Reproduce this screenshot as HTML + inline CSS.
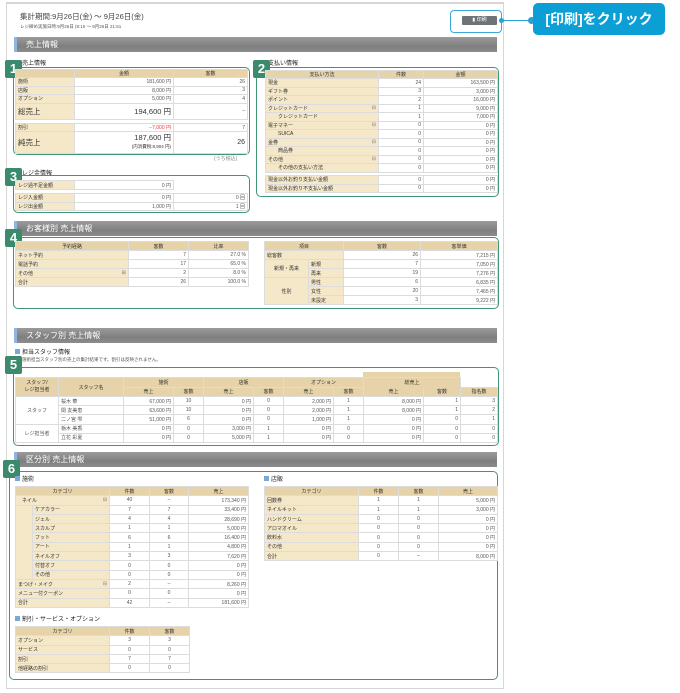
<!DOCTYPE html>
<html><head><meta charset="utf-8"><style>
*{margin:0;padding:0;box-sizing:border-box}
body{width:680px;height:693px;background:#fff;position:relative;overflow:hidden;font-family:"Liberation Sans","Noto Sans CJK JP",sans-serif;color:#333}
.a{position:absolute}
.frame{left:6px;top:2px;width:498px;height:687px;border:1px solid #d6d6d6;border-top:2px solid #d6d6d6}
.bar{position:absolute;left:14px;width:483px;height:15px;background:linear-gradient(#9a9a9a,#7f7f7f 60%,#8c8c8c);border-left:3px solid #8fb5e0;color:#fff;font-size:8px;line-height:15px;padding-left:9px}
.box{position:absolute;border:1.5px solid #3f9676;border-radius:5px}
.badge{position:absolute;width:17px;height:18px;background:#3a8a6b;color:#fff;font-weight:bold;font-size:13px;line-height:18px;text-align:center;border-radius:2px}
.sub{position:absolute;font-size:6px;color:#222;white-space:nowrap}
.sub i{display:inline-block;width:5px;height:5px;background:#7aa6d8;margin-right:2px}
table{position:absolute;border-collapse:collapse;table-layout:fixed;font-size:5px}
td{border:1px solid #dcdcdc;padding:0 2px;white-space:nowrap;overflow:hidden;background:#fff;text-align:right;color:#555}
td.h{background:#e6d3a9;text-align:center;color:#333}
td.l{background:#f4e8c8;text-align:left;color:#333}
td.c{text-align:center}
.pl{float:right;color:#777}
</style></head><body>
<div class="a frame"></div>
<div class="a" style="left:20px;top:11px;font-size:7.5px;color:#444">集計期間:9月26日(金) ～ 9月26日(金)</div>
<div class="a" style="left:20px;top:24px;font-size:4.5px;color:#555">レジ締め実施日時:9月26日 (9:10 ～ 9月26日 21:51</div>
<div class="a" style="left:450px;top:10px;width:52px;height:23px;border:1.5px solid #3aa9d8;border-radius:4px"></div>
<div class="a" style="left:462px;top:16px;width:35px;height:9px;background:#6e7378;border-radius:1px;color:#fff;font-size:5px;line-height:9px;text-align:center">▮ 印刷</div>
<div class="a" style="left:502px;top:20px;width:32px;height:1px;background:#2aa0d4"></div>
<div class="a" style="left:499px;top:18px;width:5px;height:5px;border-radius:50%;background:#2aa0d4"></div>
<div class="a" style="left:528px;top:17px;width:7px;height:7px;border-radius:50%;background:#2aa0d4"></div>
<div class="a" style="left:533px;top:3px;width:132px;height:32px;background:#0c9fd6;border-radius:5px;color:#fff;font-weight:bold;font-size:14px;line-height:32px;text-align:center">[印刷]をクリック</div>

<div class="bar" style="top:37px">売上情報</div>
<div class="sub" style="left:22px;top:58px">売上情報</div>
<div class="box" style="left:13px;top:67px;width:237px;height:88px"></div>
<div class="badge" style="left:5px;top:60px">1</div>
<table style="left:15px;top:69px;width:232px">
<col style="width:59px"><col style="width:99px"><col style="width:74px">
<tr style="height:8px"><td class="h"></td><td class="h">金額</td><td class="h">客数</td></tr>
<tr style="height:8.5px"><td class="l">施術</td><td>181,600 円</td><td>26</td></tr>
<tr style="height:8.5px"><td class="l">店販</td><td>8,000 円</td><td>3</td></tr>
<tr style="height:8.5px"><td class="l">オプション</td><td>5,000 円</td><td>4</td></tr>
<tr style="height:16px"><td class="l" style="font-size:7.5px">総売上</td><td style="font-size:7.5px;color:#333">194,600 円</td><td>–</td></tr>
</table>
<table style="left:15px;top:123px;width:232px">
<col style="width:59px"><col style="width:99px"><col style="width:74px">
<tr style="height:8px"><td class="l">割引</td><td style="color:#e33">−7,000 円</td><td>7</td></tr>
<tr style="height:22px"><td class="l" style="font-size:7.5px">純売上</td><td style="font-size:7.5px;color:#333;line-height:8px">187,600 円<br><span style="font-size:4.5px">(内消費税:8,904 円)</span></td><td style="font-size:7px;color:#333">26</td></tr>
</table>
<div class="a" style="left:214px;top:155px;font-size:5px;color:#888">(うち税込)</div>

<div class="sub" style="left:268px;top:58px">支払い情報</div>
<div class="box" style="left:256px;top:67px;width:243px;height:130px"></div>
<div class="badge" style="left:253px;top:60px">2</div>
<table style="left:265px;top:70px;width:232px">
<col style="width:113px"><col style="width:45px"><col style="width:74px">
<tr style="height:8px"><td class="h">支払い方法</td><td class="h">件数</td><td class="h">金額</td></tr>
<tr style="height:8.5px"><td class="l">現金</td><td>24</td><td>163,500 円</td></tr>
<tr style="height:8.5px"><td class="l">ギフト券</td><td>3</td><td>3,000 円</td></tr>
<tr style="height:8.5px"><td class="l">ポイント</td><td>2</td><td>16,000 円</td></tr>
<tr style="height:8.5px"><td class="l">クレジットカード<span class="pl">⊟</span></td><td>1</td><td>9,000 円</td></tr>
<tr style="height:8.5px"><td class="l" style="padding-left:12px">クレジットカード</td><td>1</td><td>7,000 円</td></tr>
<tr style="height:8.5px"><td class="l">電子マネー<span class="pl">⊟</span></td><td>0</td><td>0 円</td></tr>
<tr style="height:8.5px"><td class="l" style="padding-left:12px">SUICA</td><td>0</td><td>0 円</td></tr>
<tr style="height:8.5px"><td class="l">金券<span class="pl">⊟</span></td><td>0</td><td>0 円</td></tr>
<tr style="height:8.5px"><td class="l" style="padding-left:12px">商品券</td><td>0</td><td>0 円</td></tr>
<tr style="height:8.5px"><td class="l">その他<span class="pl">⊟</span></td><td>0</td><td>0 円</td></tr>
<tr style="height:8.5px"><td class="l" style="padding-left:12px">その他の支払い方法</td><td>0</td><td>0 円</td></tr>
</table>
<table style="left:265px;top:175px;width:232px">
<col style="width:113px"><col style="width:45px"><col style="width:74px">
<tr style="height:8.5px"><td class="l">現金以外お釣り支払い金額</td><td>0</td><td>0 円</td></tr>
<tr style="height:8.5px"><td class="l">現金以外お釣り不支払い金額</td><td>0</td><td>0 円</td></tr>
</table>

<div class="sub" style="left:22px;top:168px">レジ金情報</div>
<div class="box" style="left:13px;top:175px;width:237px;height:38px"></div>
<div class="badge" style="left:5px;top:168px">3</div>
<table style="left:15px;top:180px;width:158px">
<col style="width:59px"><col style="width:99px">
<tr style="height:9px"><td class="l">レジ過不足金額</td><td>0 円</td></tr>
</table>
<table style="left:15px;top:193px;width:232px">
<col style="width:59px"><col style="width:99px"><col style="width:74px">
<tr style="height:8.5px"><td class="l">レジ入金額</td><td>0 円</td><td>0 回</td></tr>
<tr style="height:8.5px"><td class="l">レジ出金額</td><td>1,000 円</td><td>1 回</td></tr>
</table>

<div class="bar" style="top:221px">お客様別 売上情報</div>
<div class="box" style="left:13px;top:237px;width:486px;height:72px"></div>
<div class="badge" style="left:5px;top:229px">4</div>
<table style="left:15px;top:241px;width:233px">
<col style="width:113px"><col style="width:60px"><col style="width:60px">
<tr style="height:9px"><td class="h">予約経路</td><td class="h">客数</td><td class="h">比率</td></tr>
<tr style="height:9px"><td class="l">ネット予約</td><td>7</td><td>27.0 %</td></tr>
<tr style="height:9px"><td class="l">電話予約</td><td>17</td><td>65.0 %</td></tr>
<tr style="height:9px"><td class="l">その他<span class="pl">⊞</span></td><td>2</td><td>8.0 %</td></tr>
<tr style="height:9px"><td class="l">合計</td><td>26</td><td>100.0 %</td></tr>
</table>
<table style="left:264px;top:241px;width:233px">
<col style="width:44px"><col style="width:35px"><col style="width:77px"><col style="width:77px">
<tr style="height:9px"><td class="h" colspan="2">項目</td><td class="h">客数</td><td class="h">客単価</td></tr>
<tr style="height:9px"><td class="l" colspan="2">総客数</td><td>26</td><td>7,215 円</td></tr>
<tr style="height:9px"><td class="l c" rowspan="2">新規・再来</td><td class="l">新規</td><td>7</td><td>7,050 円</td></tr>
<tr style="height:9px"><td class="l">再来</td><td>19</td><td>7,276 円</td></tr>
<tr style="height:9px"><td class="l c" rowspan="3">性別</td><td class="l">男性</td><td>6</td><td>6,835 円</td></tr>
<tr style="height:9px"><td class="l">女性</td><td>20</td><td>7,465 円</td></tr>
<tr style="height:9px"><td class="l">未設定</td><td>3</td><td>9,222 円</td></tr>
</table>

<div class="bar" style="top:328px">スタッフ別 売上情報</div>
<div class="sub" style="left:15px;top:347px"><i></i>担当スタッフ情報</div>
<div class="a" style="left:22px;top:357px;font-size:4.5px;color:#555">施術担当スタッフ別の売上の集計結果です。割引は反映されません。</div>
<div class="box" style="left:13px;top:367px;width:486px;height:79px"></div>
<div class="badge" style="left:5px;top:356px">5</div>
<div class="a" style="left:363px;top:372px;width:97px;height:15px;background:#e6d3a9"></div>
<table style="left:15px;top:377px;width:482px">
<col style="width:43px"><col style="width:65px"><col style="width:50px"><col style="width:30px"><col style="width:50px"><col style="width:30px"><col style="width:50px"><col style="width:30px"><col style="width:60px"><col style="width:37px"><col style="width:37px">
<tr style="height:9.5px"><td class="h" rowspan="2" style="line-height:7px">スタッフ/<br>レジ担当者</td><td class="h" rowspan="2">スタッフ名</td><td class="h" colspan="2">施術</td><td class="h" colspan="2">店販</td><td class="h" colspan="2">オプション</td><td class="h" colspan="2" style="border-bottom-color:#e6d3a9">総売上</td><td style="border:none;background:#fff"></td></tr>
<tr style="height:9.5px"><td class="h">売上</td><td class="h">客数</td><td class="h">売上</td><td class="h">客数</td><td class="h">売上</td><td class="h">客数</td><td class="h">売上</td><td class="h">客数</td><td class="h">指名数</td></tr>
<tr style="height:9.2px"><td class="c" rowspan="3">スタッフ</td><td style="text-align:left">桜木 華</td><td>67,000 円</td><td class="c">10</td><td>0 円</td><td class="c">0</td><td>2,000 円</td><td class="c">1</td><td>8,000 円</td><td>1</td><td>3</td></tr>
<tr style="height:9.2px"><td style="text-align:left">関 友美恵</td><td>63,600 円</td><td class="c">10</td><td>0 円</td><td class="c">0</td><td>2,000 円</td><td class="c">1</td><td>8,000 円</td><td>1</td><td>2</td></tr>
<tr style="height:9.2px"><td style="text-align:left">二ノ宮 雫</td><td>51,000 円</td><td class="c">6</td><td>0 円</td><td class="c">0</td><td>1,000 円</td><td class="c">1</td><td>0 円</td><td>0</td><td>1</td></tr>
<tr style="height:9.2px"><td class="c" rowspan="2">レジ担当者</td><td style="text-align:left">栃木 美香</td><td>0 円</td><td class="c">0</td><td>3,000 円</td><td class="c">1</td><td>0 円</td><td class="c">0</td><td>0 円</td><td>0</td><td>0</td></tr>
<tr style="height:9.2px"><td style="text-align:left">立花 彩夏</td><td>0 円</td><td class="c">0</td><td>5,000 円</td><td class="c">1</td><td>0 円</td><td class="c">0</td><td>0 円</td><td>0</td><td>0</td></tr>
</table>

<div class="bar" style="top:452px">区分別 売上情報</div>
<div class="box" style="left:9px;top:471px;width:489px;height:209px"></div>
<div class="badge" style="left:3px;top:460px">6</div>
<div class="sub" style="left:15px;top:474px"><i></i>施術</div>
<table style="left:15px;top:486px;width:233px">
<col style="width:17px"><col style="width:77px"><col style="width:40px"><col style="width:39px"><col style="width:60px">
<tr style="height:9.3px"><td class="h" colspan="2">カテゴリ</td><td class="h">件数</td><td class="h">客数</td><td class="h">売上</td></tr>
<tr style="height:9.3px"><td class="l" colspan="2" style="padding-left:6px">ネイル<span class="pl">⊟</span></td><td class="c">40</td><td class="c">–</td><td>173,340 円</td></tr>
<tr style="height:9.3px"><td class="l" rowspan="8" style="border-bottom:none"></td><td class="l">ケアカラー</td><td class="c">7</td><td class="c">7</td><td>33,400 円</td></tr>
<tr style="height:9.3px"><td class="l">ジェル</td><td class="c">4</td><td class="c">4</td><td>28,690 円</td></tr>
<tr style="height:9.3px"><td class="l">スカルプ</td><td class="c">1</td><td class="c">1</td><td>5,000 円</td></tr>
<tr style="height:9.3px"><td class="l">フット</td><td class="c">6</td><td class="c">6</td><td>16,400 円</td></tr>
<tr style="height:9.3px"><td class="l">アート</td><td class="c">1</td><td class="c">1</td><td>4,800 円</td></tr>
<tr style="height:9.3px"><td class="l">ネイルオフ</td><td class="c">3</td><td class="c">3</td><td>7,620 円</td></tr>
<tr style="height:9.3px"><td class="l">付替オフ</td><td class="c">0</td><td class="c">0</td><td>0 円</td></tr>
<tr style="height:9.3px"><td class="l">その他</td><td class="c">0</td><td class="c">0</td><td>0 円</td></tr>
<tr style="height:9.3px"><td class="l" colspan="2">まつげ・メイク<span class="pl">⊟</span></td><td class="c">2</td><td class="c">–</td><td>8,260 円</td></tr>
<tr style="height:9.3px"><td class="l" colspan="2">メニュー付クーポン</td><td class="c">0</td><td class="c">0</td><td>0 円</td></tr>
<tr style="height:9.3px"><td class="l" colspan="2">合計</td><td class="c">42</td><td class="c">–</td><td>181,600 円</td></tr>
</table>
<div class="sub" style="left:264px;top:474px"><i></i>店販</div>
<table style="left:264px;top:486px;width:233px">
<col style="width:94px"><col style="width:40px"><col style="width:40px"><col style="width:59px">
<tr style="height:9.3px"><td class="h">カテゴリ</td><td class="h">件数</td><td class="h">客数</td><td class="h">売上</td></tr>
<tr style="height:9.3px"><td class="l">回数券</td><td class="c">1</td><td class="c">1</td><td>5,000 円</td></tr>
<tr style="height:9.3px"><td class="l">ネイルキット</td><td class="c">1</td><td class="c">1</td><td>3,000 円</td></tr>
<tr style="height:9.3px"><td class="l">ハンドクリーム</td><td class="c">0</td><td class="c">0</td><td>0 円</td></tr>
<tr style="height:9.3px"><td class="l">アロマオイル</td><td class="c">0</td><td class="c">0</td><td>0 円</td></tr>
<tr style="height:9.3px"><td class="l">飲料水</td><td class="c">0</td><td class="c">0</td><td>0 円</td></tr>
<tr style="height:9.3px"><td class="l">その他</td><td class="c">0</td><td class="c">0</td><td>0 円</td></tr>
<tr style="height:9.3px"><td class="l">合計</td><td class="c">0</td><td class="c">–</td><td>8,000 円</td></tr>
</table>
<div class="sub" style="left:15px;top:614px"><i></i>割引・サービス・オプション</div>
<table style="left:15px;top:626px;width:174px">
<col style="width:94px"><col style="width:40px"><col style="width:40px">
<tr style="height:9.3px"><td class="h">カテゴリ</td><td class="h">件数</td><td class="h">客数</td></tr>
<tr style="height:9.3px"><td class="l">オプション</td><td class="c">3</td><td class="c">3</td></tr>
<tr style="height:9.3px"><td class="l">サービス</td><td class="c">0</td><td class="c">0</td></tr>
<tr style="height:9.3px"><td class="l">割引</td><td class="c">7</td><td class="c">7</td></tr>
<tr style="height:9.3px"><td class="l">他経路の割引</td><td class="c">0</td><td class="c">0</td></tr>
</table>
</body></html>
